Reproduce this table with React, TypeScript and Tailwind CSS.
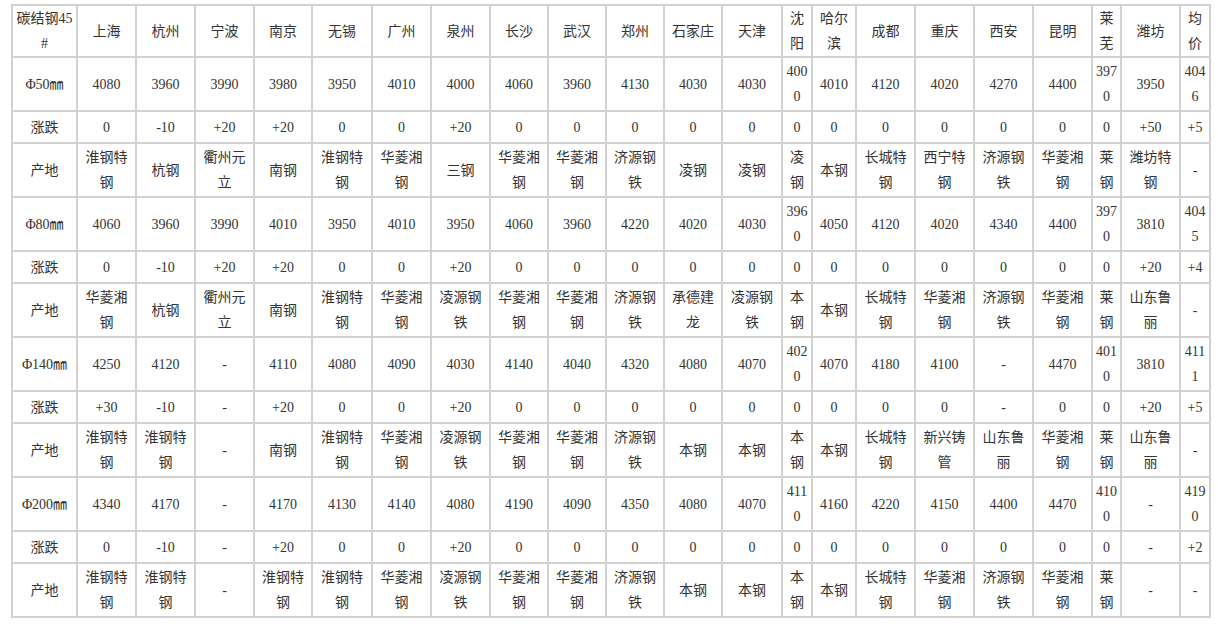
const cols = [65, 59, 59, 59, 58, 60, 59, 59, 58, 58, 58, 58, 60, 30, 44, 59, 59, 59, 59, 29, 59, 30];

const header = ["碳结钢45#", "上海", "杭州", "宁波", "南京", "无锡", "广州", "泉州", "长沙", "武汉", "郑州", "石家庄", "天津", "沈阳", "哈尔滨", "成都", "重庆", "西安", "昆明", "莱芜", "潍坊", "均价"];

type Row = { kind: "price" | "change" | "origin"; cells: string[] };

const w = (s: string) => s.split(" ");

const rows: Row[] = [
  { kind: "price", cells: ["Φ50㎜", ...w("4080 3960 3990 3980 3950 4010 4000 4060 3960 4130 4030 4030 4000 4010 4120 4020 4270 4400 3970 3950 4046")] },
  { kind: "change", cells: ["涨跌", ...w("0 -10 +20 +20 0 0 +20 0 0 0 0 0 0 0 0 0 0 0 0 +50 +5")] },
  { kind: "origin", cells: ["产地", ...w("淮钢特钢 杭钢 衢州元立 南钢 淮钢特钢 华菱湘钢 三钢 华菱湘钢 华菱湘钢 济源钢铁 凌钢 凌钢 凌钢 本钢 长城特钢 西宁特钢 济源钢铁 华菱湘钢 莱钢 潍坊特钢 -")] },
  { kind: "price", cells: ["Φ80㎜", ...w("4060 3960 3990 4010 3950 4010 3950 4060 3960 4220 4020 4030 3960 4050 4120 4020 4340 4400 3970 3810 4045")] },
  { kind: "change", cells: ["涨跌", ...w("0 -10 +20 +20 0 0 +20 0 0 0 0 0 0 0 0 0 0 0 0 +20 +4")] },
  { kind: "origin", cells: ["产地", ...w("华菱湘钢 杭钢 衢州元立 南钢 淮钢特钢 华菱湘钢 凌源钢铁 华菱湘钢 华菱湘钢 济源钢铁 承德建龙 凌源钢铁 本钢 本钢 长城特钢 华菱湘钢 济源钢铁 华菱湘钢 莱钢 山东鲁丽 -")] },
  { kind: "price", cells: ["Φ140㎜", ...w("4250 4120 - 4110 4080 4090 4030 4140 4040 4320 4080 4070 4020 4070 4180 4100 - 4470 4010 3810 4111")] },
  { kind: "change", cells: ["涨跌", ...w("+30 -10 - +20 0 0 +20 0 0 0 0 0 0 0 0 0 - 0 0 +20 +5")] },
  { kind: "origin", cells: ["产地", ...w("淮钢特钢 淮钢特钢 - 南钢 淮钢特钢 华菱湘钢 凌源钢铁 华菱湘钢 华菱湘钢 济源钢铁 本钢 本钢 本钢 本钢 长城特钢 新兴铸管 山东鲁丽 华菱湘钢 莱钢 山东鲁丽 -")] },
  { kind: "price", cells: ["Φ200㎜", ...w("4340 4170 - 4170 4130 4140 4080 4190 4090 4350 4080 4070 4110 4160 4220 4150 4400 4470 4100 - 4190")] },
  { kind: "change", cells: ["涨跌", ...w("0 -10 - +20 0 0 +20 0 0 0 0 0 0 0 0 0 0 0 0 - +2")] },
  { kind: "origin", cells: ["产地", ...w("淮钢特钢 淮钢特钢 - 淮钢特钢 淮钢特钢 华菱湘钢 凌源钢铁 华菱湘钢 华菱湘钢 济源钢铁 本钢 本钢 本钢 本钢 长城特钢 华菱湘钢 济源钢铁 华菱湘钢 莱钢 - -")] },
];

const rowHeight = {
  price: "h-[54px]",
  change: "h-[32px]",
  origin: "h-[54px]",
};

const cellClass =
  "border-2 border-[#d2d2d2] px-[3px] py-0 text-center align-middle break-all leading-[25px]";

export default function App() {
  return (
    <div className="min-h-screen bg-white pt-[4px] pl-[11px] font-['Liberation_Serif','Noto_Sans_CJK_SC',serif] text-[14px] text-[#333]">
      <table className="table-fixed border-collapse w-[1200px]">
        <colgroup>
          {cols.map((c, i) => (
            <col key={i} style={{ width: c }} />
          ))}
        </colgroup>
        <tbody>
          <tr className="h-[50px]">
            {header.map((h, i) => (
              <td key={i} className={cellClass}>
                {h}
              </td>
            ))}
          </tr>
          {rows.map((r, ri) => (
            <tr key={ri} className={rowHeight[r.kind]}>
              {r.cells.map((c, ci) => (
                <td key={ci} className={cellClass}>
                  {c}
                </td>
              ))}
            </tr>
          ))}
        </tbody>
      </table>
    </div>
  );
}
